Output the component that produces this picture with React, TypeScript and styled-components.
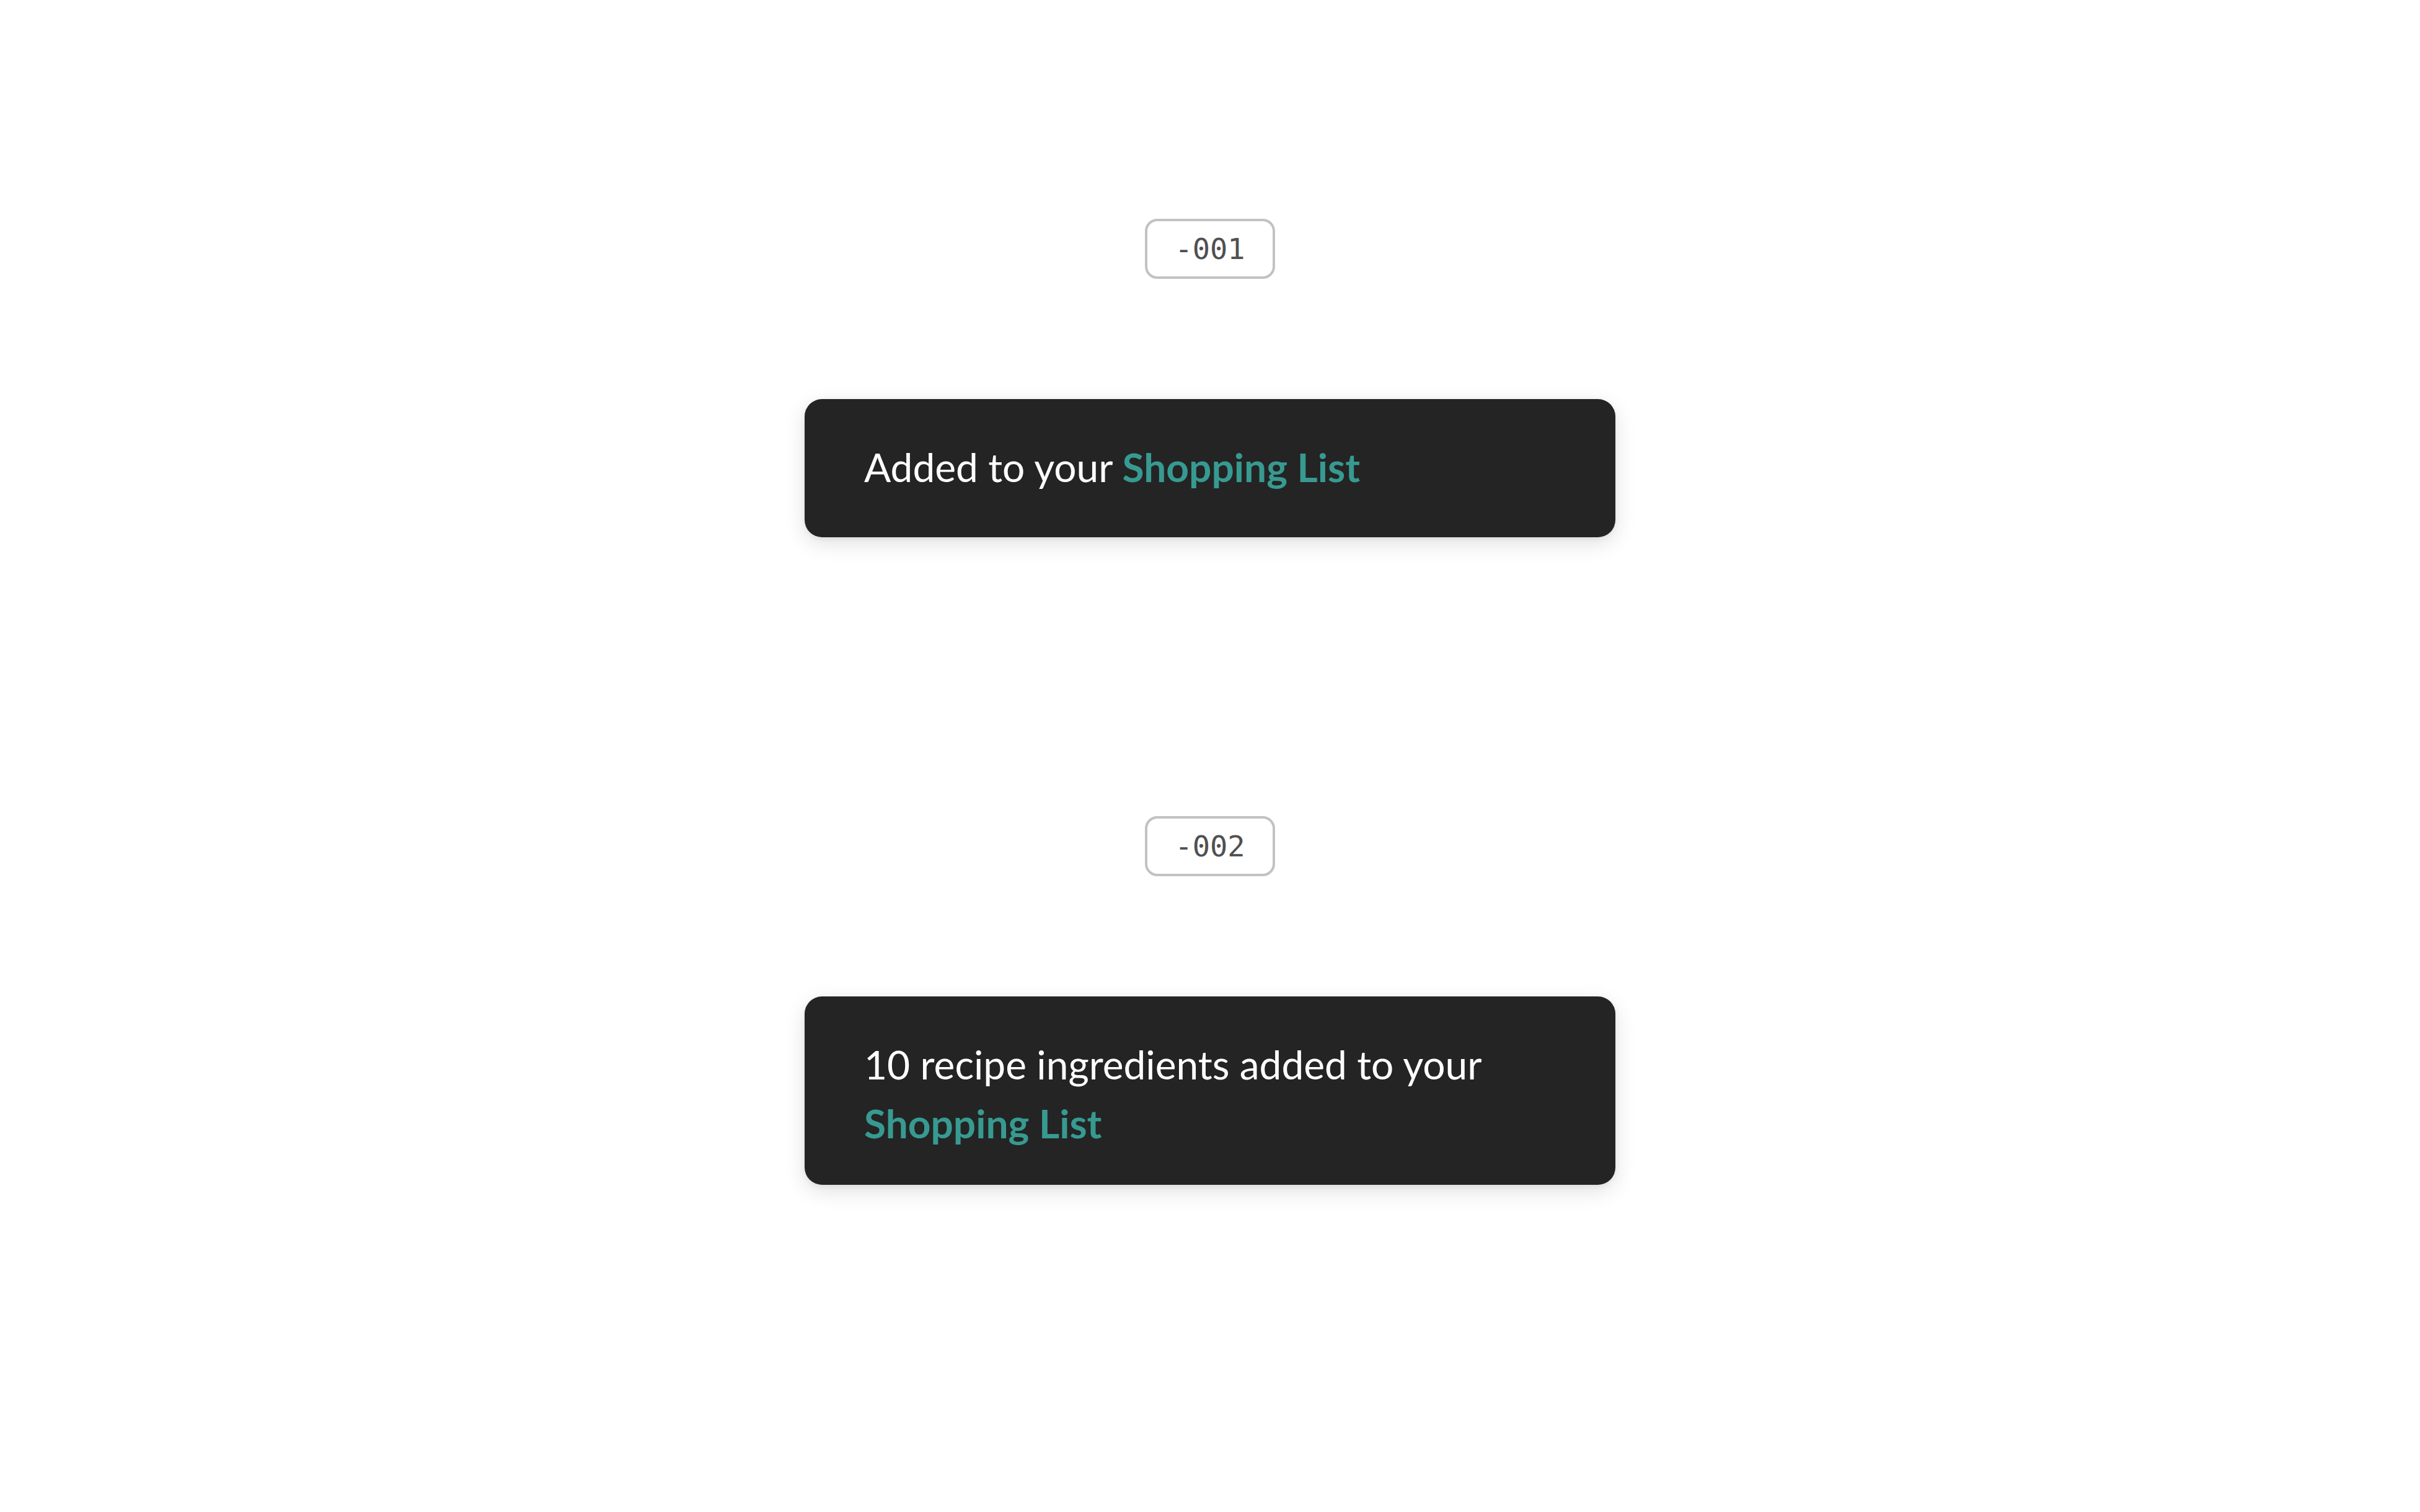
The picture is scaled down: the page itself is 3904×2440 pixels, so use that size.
import React from "react";
import styled, { createGlobalStyle } from "styled-components";

const Global = createGlobalStyle`
  html, body { margin: 0; padding: 0; background: #ffffff; }
  body { font-family: Lato, "Noto Sans", sans-serif; }
`;

const Page = styled.main`
  display: flex;
  flex-direction: column;
  align-items: center;
  gap: 450px;
  padding-top: 353px;
  min-height: 2440px;
  box-sizing: border-box;
`;

const Section = styled.section`
  display: flex;
  flex-direction: column;
  align-items: center;
  gap: 194px;
`;

const Tag = styled.div`
  box-sizing: border-box;
  width: 210px;
  height: 97px;
  border: 4px solid #c2c2c2;
  border-radius: 20px;
  display: flex;
  align-items: center;
  justify-content: center;
  font-family: "DejaVu Sans Mono", "Liberation Mono", monospace;
  font-size: 47px;
  color: #505050;
`;

const Toast = styled.div`
  box-sizing: border-box;
  width: 1308px;
  min-height: 223px;
  padding: 62px 96px 52px;
  background: #242424;
  border-radius: 28px;
  box-shadow: 0 10px 34px rgba(0, 0, 0, 0.12), 0 2px 8px rgba(0, 0, 0, 0.06);
`;

const Message = styled.p`
  margin: 0;
  font-family: Lato, "Noto Sans", sans-serif;
  font-size: 64px;
  line-height: 95px;
  color: #ffffff;
  font-weight: 400;
`;

const Link = styled.span`
  color: #379a91;
  font-weight: 700;
`;

export default function App() {
  return (
    <>
      <Global />
      <Page>
        <Section>
          <Tag>-001</Tag>
          <Toast>
            <Message>
              Added to your <Link>Shopping List</Link>
            </Message>
          </Toast>
        </Section>
        <Section>
          <Tag>-002</Tag>
          <Toast>
            <Message>
              10 recipe ingredients added to your <Link>Shopping List</Link>
            </Message>
          </Toast>
        </Section>
      </Page>
    </>
  );
}
